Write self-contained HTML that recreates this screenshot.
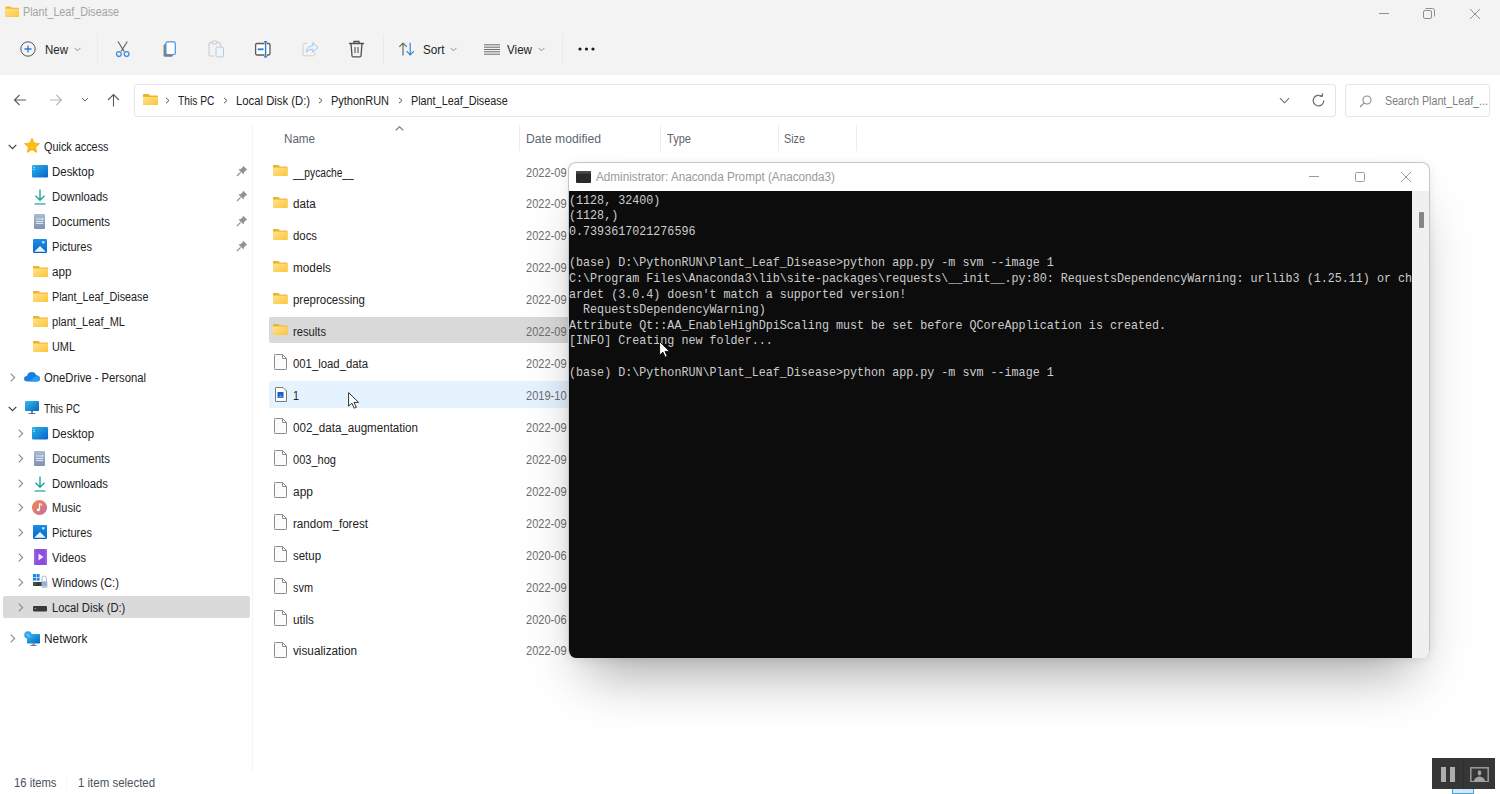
<!DOCTYPE html>
<html><head><meta charset="utf-8"><title>Plant_Leaf_Disease</title>
<style>
html,body{margin:0;padding:0;width:1500px;height:794px;overflow:hidden;background:#fff}
body{position:relative;font-family:'Liberation Sans', sans-serif}
</style></head><body>
<svg width="0" height="0" style="position:absolute"><defs><linearGradient id="fgrad" x1="0" y1="0" x2="1" y2="1"><stop offset="0" stop-color="#ffe38c"/><stop offset="1" stop-color="#fcc53a"/></linearGradient></defs></svg>
<div style="position:absolute;left:0;top:0;width:1500px;height:75px;background:#f3f3f3"></div>
<div style="position:absolute;left:0;top:75px;width:1500px;height:719px;background:#ffffff"></div>
<svg style="position:absolute;left:4.5px;top:5.5px" width="14.5" height="11.3" viewBox="0 0 16 13" preserveAspectRatio="none"><path d="M0.5 1.2 Q0.5 0.5 1.2 0.5 H6 L7.5 2 H14.8 Q15.5 2 15.5 2.7 V12 Q15.5 12.5 15 12.5 H1 Q0.5 12.5 0.5 12 Z" fill="#f2b830"/><path d="M0.5 3.2 H15.5 V12 Q15.5 12.5 15 12.5 H1 Q0.5 12.5 0.5 12 Z" fill="url(#fgrad)"/></svg>
<div style="position:absolute;left:23.00px;top:4.04px;font-family:'Liberation Sans', sans-serif;font-size:12px;line-height:17px;color:#a4a4a4;white-space:pre;transform:scaleX(0.8937);transform-origin:0 0">Plant_Leaf_Disease</div>
<div style="position:absolute;left:1379px;top:13px;width:10px;height:1px;background:#8f8f8f"></div>
<svg style="position:absolute;left:1423px;top:8px" width="12" height="12" viewBox="0 0 12 12" fill="none" stroke="#8f8f8f" stroke-width="1"><rect x="0.5" y="2.5" width="8" height="8" rx="1.5"/><path d="M2.5 0.5 H9.5 Q11.5 0.5 11.5 2.5 V8.5"/></svg>
<svg style="position:absolute;left:1469px;top:8px" width="12" height="12" viewBox="0 0 12 12" fill="none" stroke="#8f8f8f" stroke-width="1"><path d="M1 1 L11 11 M11 1 L1 11"/></svg>
<svg style="position:absolute;left:20px;top:41px" width="16" height="16" viewBox="0 0 16 16" fill="none"><circle cx="8" cy="8" r="7.2" stroke="#555" stroke-width="1"/><path d="M8 4.5 V11.5 M4.5 8 H11.5" stroke="#2b7bd6" stroke-width="1.3"/></svg>
<div style="position:absolute;left:45.00px;top:42.04px;font-family:'Liberation Sans', sans-serif;font-size:12px;line-height:17px;color:#222222;white-space:pre;transform:scaleX(0.9577);transform-origin:0 0">New</div>
<svg style="position:absolute;left:74px;top:47px" width="7" height="5" viewBox="0 0 7 5" fill="none" stroke="#8a8a8a" stroke-width="1"><path d="M0.5 0.8 L3.5 3.8 L6.5 0.8"/></svg>
<div style="position:absolute;left:97px;top:34px;width:1px;height:29px;background:#e9e9e9"></div>
<svg style="position:absolute;left:114px;top:40px" width="17" height="18" viewBox="0 0 17 18" fill="none"><path d="M4 1.5 L10.2 11.5 M13.3 1.5 L7.1 11.5" stroke="#5e5e5e" stroke-width="1.1"/><circle cx="4.9" cy="14.1" r="2.4" stroke="#3f8ddb" stroke-width="1.3"/><circle cx="12.6" cy="14.1" r="2.4" stroke="#3f8ddb" stroke-width="1.3"/></svg>
<svg style="position:absolute;left:162px;top:40px" width="16" height="18" viewBox="0 0 16 18" fill="none"><rect x="1.6" y="4" width="9.2" height="12.8" rx="1.6" fill="#7d7d7d"/><rect x="3.9" y="1.9" width="9.4" height="12.6" rx="1.6" fill="#fdfeff" stroke="#4596e3" stroke-width="1.2"/></svg>
<svg style="position:absolute;left:208px;top:40px" width="17" height="18" viewBox="0 0 17 18" fill="none" stroke-width="1"><path d="M9 2.5 H11 Q12.5 2.5 12.5 4 V6 M4 2.5 H2 Q1 2.5 1 4 V15 Q1 16 2 16 H6" stroke="#c9c9c9"/><rect x="4" y="1" width="5" height="3" rx="1" stroke="#c9c9c9"/><rect x="8" y="7" width="7.5" height="10" rx="1.5" stroke="#a9cbef"/></svg>
<svg style="position:absolute;left:254px;top:40px" width="18" height="18" viewBox="0 0 18 18" fill="none"><path d="M10.5 3.5 H3 Q1.6 3.5 1.6 4.9 V13.6 Q1.6 15 3 15 H10.5" stroke="#5a5a5a" stroke-width="1.3" fill="#fff"/><path d="M12.8 3.5 H14.6 Q16 3.5 16 4.9 V13.6 Q16 15 14.6 15 H12.8" stroke="#5a5a5a" stroke-width="1.3" fill="#fff"/><path d="M11.6 1.5 V17 M10 1.7 H13.2 M10 16.8 H13.2" stroke="#2b7bd6" stroke-width="1.3"/><path d="M3.8 9.3 H9.6" stroke="#2b7bd6" stroke-width="1.8"/></svg>
<svg style="position:absolute;left:302px;top:41px" width="17" height="16" viewBox="0 0 17 16" fill="none" stroke-width="1"><path d="M5 2.5 H2.2 Q1 2.5 1 3.7 V13.6 Q1 14.8 2.2 14.8 H11.6 Q12.8 14.8 12.8 13.6 V11.5" stroke="#d0d0d0"/><path d="M4.2 11 Q5 5.2 10.8 4.8 V1.6 L16 6.4 L10.8 11.2 V8.2 Q7 8 4.2 11 Z" stroke="#9cc6ee" fill="#eef5fc"/></svg>
<svg style="position:absolute;left:348px;top:40px" width="17" height="18" viewBox="0 0 17 18" fill="none" stroke="#505050" stroke-width="1.3"><path d="M1 3.5 H16 M6 3.5 V1.5 H11 V3.5 M3 3.5 L4 16 Q4.1 16.8 5 16.8 H12 Q12.9 16.8 13 16 L14 3.5"/><path d="M7 7 V13 M10 7 V13" stroke-width="1.1"/></svg>
<div style="position:absolute;left:383px;top:34px;width:1px;height:29px;background:#e9e9e9"></div>
<svg style="position:absolute;left:398px;top:42px" width="18" height="14" viewBox="0 0 18 14" fill="none" stroke-width="1.2"><path d="M5 13.5 V1.2 M1.3 4.9 L5 1.2 L8.7 4.9" stroke="#6a6a6a"/><path d="M12.2 0.8 V12.8 M8.5 9.1 L12.2 12.8 L15.9 9.1" stroke="#2f86da"/></svg>
<div style="position:absolute;left:422.70px;top:42.04px;font-family:'Liberation Sans', sans-serif;font-size:12px;line-height:17px;color:#222222;white-space:pre;transform:scaleX(0.9766);transform-origin:0 0">Sort</div>
<svg style="position:absolute;left:450px;top:47px" width="7" height="5" viewBox="0 0 7 5" fill="none" stroke="#8a8a8a" stroke-width="1"><path d="M0.5 0.8 L3.5 3.8 L6.5 0.8"/></svg>
<svg style="position:absolute;left:483.5px;top:43.5px" width="16" height="11" viewBox="0 0 16 11" fill="none" stroke="#5a5a5a" stroke-width="0.9"><path d="M0 0.8 H16 M0 3.2 H16 M0 5.5 H16 M0 7.8 H16 M0 10.2 H16"/></svg>
<div style="position:absolute;left:507.20px;top:42.04px;font-family:'Liberation Sans', sans-serif;font-size:12px;line-height:17px;color:#222222;white-space:pre;transform:scaleX(0.9691);transform-origin:0 0">View</div>
<svg style="position:absolute;left:538px;top:47px" width="7" height="5" viewBox="0 0 7 5" fill="none" stroke="#8a8a8a" stroke-width="1"><path d="M0.5 0.8 L3.5 3.8 L6.5 0.8"/></svg>
<div style="position:absolute;left:562px;top:34px;width:1px;height:29px;background:#e9e9e9"></div>
<svg style="position:absolute;left:578px;top:47px" width="17" height="4" viewBox="0 0 17 4" fill="#1b1b1b"><circle cx="2" cy="2" r="1.6"/><circle cx="8.5" cy="2" r="1.6"/><circle cx="15" cy="2" r="1.6"/></svg>
<svg style="position:absolute;left:13px;top:93px" width="14" height="14" viewBox="0 0 14 14" fill="none" stroke="#5a5a5a" stroke-width="1.1"><path d="M1.5 7 H13 M6.5 2 L1.5 7 L6.5 12"/></svg>
<svg style="position:absolute;left:49px;top:93px" width="14" height="14" viewBox="0 0 14 14" fill="none" stroke="#b5b5b5" stroke-width="1.1"><path d="M12.5 7 H1 M7.5 2 L12.5 7 L7.5 12"/></svg>
<svg style="position:absolute;left:81px;top:97px" width="8" height="5" viewBox="0 0 8 5" fill="none" stroke="#6a6a6a" stroke-width="1"><path d="M1 1 L4 4 L7 1"/></svg>
<svg style="position:absolute;left:106px;top:93px" width="15" height="14" viewBox="0 0 15 14" fill="none" stroke="#5a5a5a" stroke-width="1.1"><path d="M7.5 1.5 V13.5 M2 7 L7.5 1.5 L13 7"/></svg>
<div style="position:absolute;left:134px;top:83.5px;width:1202px;height:33.5px;box-sizing:border-box;border:1px solid #e5e5e5;border-radius:3px;background:#fff"></div>
<svg style="position:absolute;left:143px;top:94px" width="15" height="11" viewBox="0 0 15 11"><path d="M0 1 Q0 0 1 0 H5.5 L7 1.5 H14 Q15 1.5 15 2.5 V10 Q15 11 14 11 H1 Q0 11 0 10 Z" fill="#f0b429"/><path d="M0 3 H15 V10 Q15 11 14 11 H1 Q0 11 0 10 Z" fill="url(#fgrad)"/></svg>
<svg style="position:absolute;left:165.0px;top:97px" width="5" height="7" viewBox="0 0 5 7" fill="none" stroke="#555" stroke-width="1"><path d="M1 0.8 L4 3.5 L1 6.2"/></svg>
<svg style="position:absolute;left:223.0px;top:97px" width="5" height="7" viewBox="0 0 5 7" fill="none" stroke="#555" stroke-width="1"><path d="M1 0.8 L4 3.5 L1 6.2"/></svg>
<svg style="position:absolute;left:317.9px;top:97px" width="5" height="7" viewBox="0 0 5 7" fill="none" stroke="#555" stroke-width="1"><path d="M1 0.8 L4 3.5 L1 6.2"/></svg>
<svg style="position:absolute;left:397.7px;top:97px" width="5" height="7" viewBox="0 0 5 7" fill="none" stroke="#555" stroke-width="1"><path d="M1 0.8 L4 3.5 L1 6.2"/></svg>
<div style="position:absolute;left:177.90px;top:92.54px;font-family:'Liberation Sans', sans-serif;font-size:12px;line-height:17px;color:#222222;white-space:pre;transform:scaleX(0.8527);transform-origin:0 0">This PC</div>
<div style="position:absolute;left:235.90px;top:92.54px;font-family:'Liberation Sans', sans-serif;font-size:12px;line-height:17px;color:#222222;white-space:pre;transform:scaleX(0.9417);transform-origin:0 0">Local Disk (D:)</div>
<div style="position:absolute;left:331.30px;top:92.54px;font-family:'Liberation Sans', sans-serif;font-size:12px;line-height:17px;color:#222222;white-space:pre;transform:scaleX(0.9154);transform-origin:0 0">PythonRUN</div>
<div style="position:absolute;left:410.60px;top:92.54px;font-family:'Liberation Sans', sans-serif;font-size:12px;line-height:17px;color:#222222;white-space:pre;transform:scaleX(0.9002);transform-origin:0 0">Plant_Leaf_Disease</div>
<svg style="position:absolute;left:1279px;top:96.5px" width="11" height="7" viewBox="0 0 12 7" fill="none" stroke="#666" stroke-width="1.1"><path d="M1 1 L6 6 L11 1"/></svg>
<svg style="position:absolute;left:1310.5px;top:93px" width="15" height="15" viewBox="0 0 15 15" fill="none" stroke="#6a6a6a" stroke-width="1.2"><path d="M12.8 7.5 A5.3 5.3 0 1 1 10.8 3.4"/><path d="M8.5 3.2 H11.5 V0.2" /></svg>
<div style="position:absolute;left:1345px;top:83.5px;width:145px;height:33px;box-sizing:border-box;border:1px solid #e5e5e5;border-radius:3px;background:#fff"></div>
<svg style="position:absolute;left:1359px;top:94.5px" width="13" height="13" viewBox="0 0 13 13" fill="none" stroke="#888" stroke-width="1.1"><circle cx="8" cy="5" r="4"/><path d="M5.2 7.8 L1 12"/></svg>
<div style="position:absolute;left:1385.00px;top:93.34px;font-family:'Liberation Sans', sans-serif;font-size:12px;line-height:17px;color:#7d7d7d;white-space:pre;transform:scaleX(0.8924);transform-origin:0 0">Search Plant_Leaf_...</div>
<div style="position:absolute;left:252px;top:125px;width:1px;height:647px;background:#f4f4f4"></div>
<div style="position:absolute;left:2.7px;top:596.4px;width:247.6px;height:21.2px;background:#dadada;border-radius:2px"></div>
<svg style="position:absolute;left:8px;top:144px" width="9" height="6" viewBox="0 0 9 6" fill="none" stroke="#3a3a3a" stroke-width="1.1"><path d="M0.7 0.8 L4.5 4.6 L8.3 0.8"/></svg>
<svg style="position:absolute;left:24px;top:138px" width="16" height="16" viewBox="1 1 22 22"><path d="M12 1.5 L15.1 8 L22.3 8.8 L17 13.7 L18.5 20.8 L12 17.2 L5.5 20.8 L7 13.7 L1.7 8.8 L8.9 8 Z" fill="#fbbf16" stroke="#f5a800" stroke-width="1" stroke-linejoin="round"/></svg>
<div style="position:absolute;left:43.75px;top:138.79px;font-family:'Liberation Sans', sans-serif;font-size:12px;line-height:17px;color:#222222;white-space:pre;transform:scaleX(0.9039);transform-origin:0 0">Quick access</div>
<svg style="position:absolute;left:32px;top:165px" width="16" height="13" viewBox="0 0 16 13"><defs><linearGradient id="dg32165" x1="0" y1="0" x2="1" y2="1"><stop offset="0" stop-color="#28b5ea"/><stop offset="1" stop-color="#0a62c9"/></linearGradient></defs><rect x="0" y="0" width="16" height="12.5" rx="1.2" fill="url(#dg32165)"/><rect x="1.5" y="2" width="1.2" height="1" fill="#d8f2ff"/><rect x="1.5" y="4" width="1.2" height="1" fill="#d8f2ff"/></svg>
<div style="position:absolute;left:52.40px;top:164.04px;font-family:'Liberation Sans', sans-serif;font-size:12px;line-height:17px;color:#222222;white-space:pre;transform:scaleX(0.9539);transform-origin:0 0">Desktop</div>
<svg style="position:absolute;left:236px;top:165px" width="12" height="12" viewBox="0 0 12 12"><path d="M7.2 0.8 L11.2 4.8 L9.8 5.4 L8 7.2 L7.6 9.6 L2.4 4.4 L4.8 4 L6.6 2.2 Z" fill="#8d9498"/><path d="M4.6 7.4 L1 11" stroke="#8d9498" stroke-width="1.2"/></svg>
<svg style="position:absolute;left:34px;top:188.5px" width="12" height="16" viewBox="0 0 12 16" fill="none" stroke="#1fa39a" stroke-width="1.4"><path d="M6 0.5 V11 M1.5 6.8 L6 11.2 L10.5 6.8"/><path d="M0.5 15 H11.5" stroke="#52c0b0" stroke-width="1.6"/></svg>
<div style="position:absolute;left:52.40px;top:189.04px;font-family:'Liberation Sans', sans-serif;font-size:12px;line-height:17px;color:#222222;white-space:pre;transform:scaleX(0.9432);transform-origin:0 0">Downloads</div>
<svg style="position:absolute;left:236px;top:190px" width="12" height="12" viewBox="0 0 12 12"><path d="M7.2 0.8 L11.2 4.8 L9.8 5.4 L8 7.2 L7.6 9.6 L2.4 4.4 L4.8 4 L6.6 2.2 Z" fill="#8d9498"/><path d="M4.6 7.4 L1 11" stroke="#8d9498" stroke-width="1.2"/></svg>
<svg style="position:absolute;left:34.4px;top:213.5px" width="11" height="15" viewBox="0 0 11 15"><defs><linearGradient id="dc34_4213_5" x1="0" y1="0" x2="0" y2="1"><stop offset="0" stop-color="#a9bbd3"/><stop offset="1" stop-color="#7d93b3"/></linearGradient></defs><rect x="0" y="0" width="11" height="15" rx="1" fill="url(#dc34_4213_5)"/><path d="M2 5 H7 M2 7.5 H9 M2 9.5 H9" stroke="#dfe8f3" stroke-width="1"/><rect x="7.6" y="4.2" width="1.6" height="1.6" fill="#fff"/></svg>
<div style="position:absolute;left:52.40px;top:214.04px;font-family:'Liberation Sans', sans-serif;font-size:12px;line-height:17px;color:#222222;white-space:pre;transform:scaleX(0.9555);transform-origin:0 0">Documents</div>
<svg style="position:absolute;left:236px;top:215px" width="12" height="12" viewBox="0 0 12 12"><path d="M7.2 0.8 L11.2 4.8 L9.8 5.4 L8 7.2 L7.6 9.6 L2.4 4.4 L4.8 4 L6.6 2.2 Z" fill="#8d9498"/><path d="M4.6 7.4 L1 11" stroke="#8d9498" stroke-width="1.2"/></svg>
<svg style="position:absolute;left:33px;top:239.2px" width="14" height="14" viewBox="0 0 14 14"><defs><linearGradient id="pc33239_2" x1="0" y1="0" x2="0" y2="1"><stop offset="0" stop-color="#1b8ee8"/><stop offset="1" stop-color="#0a66c9"/></linearGradient></defs><rect x="0" y="0" width="14" height="14" rx="1" fill="url(#pc33239_2)"/><path d="M1.2 12.8 L7 7 L12.8 12.8 Z" fill="#eaf4fd"/><circle cx="10.3" cy="3.3" r="1.2" fill="#cfe8fb"/></svg>
<div style="position:absolute;left:52.40px;top:239.04px;font-family:'Liberation Sans', sans-serif;font-size:12px;line-height:17px;color:#222222;white-space:pre;transform:scaleX(0.9225);transform-origin:0 0">Pictures</div>
<svg style="position:absolute;left:236px;top:240px" width="12" height="12" viewBox="0 0 12 12"><path d="M7.2 0.8 L11.2 4.8 L9.8 5.4 L8 7.2 L7.6 9.6 L2.4 4.4 L4.8 4 L6.6 2.2 Z" fill="#8d9498"/><path d="M4.6 7.4 L1 11" stroke="#8d9498" stroke-width="1.2"/></svg>
<svg style="position:absolute;left:32.5px;top:265.5px" width="15" height="11" viewBox="0 0 15 11" preserveAspectRatio="none"><path d="M0 0.8 Q0 0 0.8 0 H5.5 L7 1.5 H14.2 Q15 1.5 15 2.3 V10.2 Q15 11 14.2 11 H0.8 Q0 11 0 10.2 Z" fill="#efb12a"/><path d="M0 2.6 H15 V10.2 Q15 11 14.2 11 H0.8 Q0 11 0 10.2 Z" fill="url(#fgrad)"/></svg>
<div style="position:absolute;left:52.40px;top:264.04px;font-family:'Liberation Sans', sans-serif;font-size:12px;line-height:17px;color:#222222;white-space:pre;transform:scaleX(0.9735);transform-origin:0 0">app</div>
<svg style="position:absolute;left:32.5px;top:290.5px" width="15" height="11" viewBox="0 0 15 11" preserveAspectRatio="none"><path d="M0 0.8 Q0 0 0.8 0 H5.5 L7 1.5 H14.2 Q15 1.5 15 2.3 V10.2 Q15 11 14.2 11 H0.8 Q0 11 0 10.2 Z" fill="#efb12a"/><path d="M0 2.6 H15 V10.2 Q15 11 14.2 11 H0.8 Q0 11 0 10.2 Z" fill="url(#fgrad)"/></svg>
<div style="position:absolute;left:52.40px;top:289.04px;font-family:'Liberation Sans', sans-serif;font-size:12px;line-height:17px;color:#222222;white-space:pre;transform:scaleX(0.8983);transform-origin:0 0">Plant_Leaf_Disease</div>
<svg style="position:absolute;left:32.5px;top:315.5px" width="15" height="11" viewBox="0 0 15 11" preserveAspectRatio="none"><path d="M0 0.8 Q0 0 0.8 0 H5.5 L7 1.5 H14.2 Q15 1.5 15 2.3 V10.2 Q15 11 14.2 11 H0.8 Q0 11 0 10.2 Z" fill="#efb12a"/><path d="M0 2.6 H15 V10.2 Q15 11 14.2 11 H0.8 Q0 11 0 10.2 Z" fill="url(#fgrad)"/></svg>
<div style="position:absolute;left:52.40px;top:314.04px;font-family:'Liberation Sans', sans-serif;font-size:12px;line-height:17px;color:#222222;white-space:pre;transform:scaleX(0.9193);transform-origin:0 0">plant_Leaf_ML</div>
<svg style="position:absolute;left:32.5px;top:340.5px" width="15" height="11" viewBox="0 0 15 11" preserveAspectRatio="none"><path d="M0 0.8 Q0 0 0.8 0 H5.5 L7 1.5 H14.2 Q15 1.5 15 2.3 V10.2 Q15 11 14.2 11 H0.8 Q0 11 0 10.2 Z" fill="#efb12a"/><path d="M0 2.6 H15 V10.2 Q15 11 14.2 11 H0.8 Q0 11 0 10.2 Z" fill="url(#fgrad)"/></svg>
<div style="position:absolute;left:52.40px;top:339.04px;font-family:'Liberation Sans', sans-serif;font-size:12px;line-height:17px;color:#222222;white-space:pre;transform:scaleX(0.9075);transform-origin:0 0">UML</div>
<svg style="position:absolute;left:10.2px;top:372.5px" width="6" height="9" viewBox="0 0 6 9" fill="none" stroke="#8a8a8a" stroke-width="1.1"><path d="M0.8 0.7 L4.6 4.5 L0.8 8.3"/></svg>
<svg style="position:absolute;left:24px;top:371px" width="16" height="11" viewBox="0 0 16 11"><path d="M3.5 10.5 Q0 10.5 0 7.8 Q0 5.3 3 5 Q3.8 1 7.8 1 Q11 1 12.3 4.3 Q16 4.6 16 7.6 Q16 10.5 12.8 10.5 Z" fill="#1a7fe0"/><path d="M6 10.5 L9.5 6.5 Q12 4.5 14.5 5.6 Q16 6.5 16 7.8 Q16 10.5 12.8 10.5 Z" fill="#2d9cf0"/></svg>
<div style="position:absolute;left:43.90px;top:370.04px;font-family:'Liberation Sans', sans-serif;font-size:12px;line-height:17px;color:#222222;white-space:pre;transform:scaleX(0.9382);transform-origin:0 0">OneDrive - Personal</div>
<svg style="position:absolute;left:8px;top:406px" width="9" height="6" viewBox="0 0 9 6" fill="none" stroke="#3a3a3a" stroke-width="1.1"><path d="M0.7 0.8 L4.5 4.6 L8.3 0.8"/></svg>
<svg style="position:absolute;left:25px;top:401px" width="14" height="14" viewBox="0 0 14 14"><defs><linearGradient id="tpc" x1="0" y1="0" x2="1" y2="1"><stop offset="0" stop-color="#2cc0ec"/><stop offset="1" stop-color="#0b62c4"/></linearGradient></defs><rect x="0" y="0" width="14" height="10" rx="0.8" fill="url(#tpc)"/><rect x="6" y="10" width="2" height="2" fill="#6b7c8c"/><rect x="3.5" y="12" width="7" height="1" fill="#6b7c8c"/></svg>
<div style="position:absolute;left:43.90px;top:401.04px;font-family:'Liberation Sans', sans-serif;font-size:12px;line-height:17px;color:#222222;white-space:pre;transform:scaleX(0.8433);transform-origin:0 0">This PC</div>
<svg style="position:absolute;left:18.2px;top:428.5px" width="6" height="9" viewBox="0 0 6 9" fill="none" stroke="#8a8a8a" stroke-width="1.1"><path d="M0.8 0.7 L4.6 4.5 L0.8 8.3"/></svg>
<svg style="position:absolute;left:32px;top:427px" width="16" height="13" viewBox="0 0 16 13"><defs><linearGradient id="dg32427" x1="0" y1="0" x2="1" y2="1"><stop offset="0" stop-color="#28b5ea"/><stop offset="1" stop-color="#0a62c9"/></linearGradient></defs><rect x="0" y="0" width="16" height="12.5" rx="1.2" fill="url(#dg32427)"/><rect x="1.5" y="2" width="1.2" height="1" fill="#d8f2ff"/><rect x="1.5" y="4" width="1.2" height="1" fill="#d8f2ff"/></svg>
<div style="position:absolute;left:52.40px;top:426.04px;font-family:'Liberation Sans', sans-serif;font-size:12px;line-height:17px;color:#222222;white-space:pre;transform:scaleX(0.9539);transform-origin:0 0">Desktop</div>
<svg style="position:absolute;left:18.2px;top:453.5px" width="6" height="9" viewBox="0 0 6 9" fill="none" stroke="#8a8a8a" stroke-width="1.1"><path d="M0.8 0.7 L4.6 4.5 L0.8 8.3"/></svg>
<svg style="position:absolute;left:34.4px;top:450.5px" width="11" height="15" viewBox="0 0 11 15"><defs><linearGradient id="dc34_4450_5" x1="0" y1="0" x2="0" y2="1"><stop offset="0" stop-color="#a9bbd3"/><stop offset="1" stop-color="#7d93b3"/></linearGradient></defs><rect x="0" y="0" width="11" height="15" rx="1" fill="url(#dc34_4450_5)"/><path d="M2 5 H7 M2 7.5 H9 M2 9.5 H9" stroke="#dfe8f3" stroke-width="1"/><rect x="7.6" y="4.2" width="1.6" height="1.6" fill="#fff"/></svg>
<div style="position:absolute;left:52.40px;top:451.04px;font-family:'Liberation Sans', sans-serif;font-size:12px;line-height:17px;color:#222222;white-space:pre;transform:scaleX(0.9555);transform-origin:0 0">Documents</div>
<svg style="position:absolute;left:18.2px;top:478.5px" width="6" height="9" viewBox="0 0 6 9" fill="none" stroke="#8a8a8a" stroke-width="1.1"><path d="M0.8 0.7 L4.6 4.5 L0.8 8.3"/></svg>
<svg style="position:absolute;left:34px;top:475.5px" width="12" height="16" viewBox="0 0 12 16" fill="none" stroke="#1fa39a" stroke-width="1.4"><path d="M6 0.5 V11 M1.5 6.8 L6 11.2 L10.5 6.8"/><path d="M0.5 15 H11.5" stroke="#52c0b0" stroke-width="1.6"/></svg>
<div style="position:absolute;left:52.40px;top:476.04px;font-family:'Liberation Sans', sans-serif;font-size:12px;line-height:17px;color:#222222;white-space:pre;transform:scaleX(0.9432);transform-origin:0 0">Downloads</div>
<svg style="position:absolute;left:18.2px;top:502.5px" width="6" height="9" viewBox="0 0 6 9" fill="none" stroke="#8a8a8a" stroke-width="1.1"><path d="M0.8 0.7 L4.6 4.5 L0.8 8.3"/></svg>
<svg style="position:absolute;left:32px;top:500px" width="15" height="15" viewBox="0 0 15 15"><defs><linearGradient id="mus" x1="0" y1="0" x2="1" y2="1"><stop offset="0" stop-color="#f08a4a"/><stop offset="1" stop-color="#c86aa8"/></linearGradient></defs><circle cx="7.5" cy="7.5" r="7.5" fill="url(#mus)"/><path d="M7.5 3.5 V9.5 M7.5 3.5 Q9.5 4 9.8 5.5" stroke="#fff" stroke-width="1.2" fill="none"/><circle cx="6.3" cy="9.8" r="1.5" fill="#fff"/></svg>
<div style="position:absolute;left:52.40px;top:500.04px;font-family:'Liberation Sans', sans-serif;font-size:12px;line-height:17px;color:#222222;white-space:pre;transform:scaleX(0.9252);transform-origin:0 0">Music</div>
<svg style="position:absolute;left:18.2px;top:527.5px" width="6" height="9" viewBox="0 0 6 9" fill="none" stroke="#8a8a8a" stroke-width="1.1"><path d="M0.8 0.7 L4.6 4.5 L0.8 8.3"/></svg>
<svg style="position:absolute;left:33px;top:525px" width="14" height="14" viewBox="0 0 14 14"><defs><linearGradient id="pc33525" x1="0" y1="0" x2="0" y2="1"><stop offset="0" stop-color="#1b8ee8"/><stop offset="1" stop-color="#0a66c9"/></linearGradient></defs><rect x="0" y="0" width="14" height="14" rx="1" fill="url(#pc33525)"/><path d="M1.2 12.8 L7 7 L12.8 12.8 Z" fill="#eaf4fd"/><circle cx="10.3" cy="3.3" r="1.2" fill="#cfe8fb"/></svg>
<div style="position:absolute;left:52.40px;top:525.04px;font-family:'Liberation Sans', sans-serif;font-size:12px;line-height:17px;color:#222222;white-space:pre;transform:scaleX(0.9225);transform-origin:0 0">Pictures</div>
<svg style="position:absolute;left:18.2px;top:552.5px" width="6" height="9" viewBox="0 0 6 9" fill="none" stroke="#8a8a8a" stroke-width="1.1"><path d="M0.8 0.7 L4.6 4.5 L0.8 8.3"/></svg>
<svg style="position:absolute;left:33.5px;top:549px" width="13" height="16" viewBox="0 0 13 16"><rect x="0" y="0" width="13" height="16" rx="1" fill="#8b4fe0"/><path d="M1 1 V15 M12 1 V15" stroke="#b88af0" stroke-width="1" stroke-dasharray="1.2 1.2"/><path d="M4.5 4.5 L9.5 8 L4.5 11.5 Z" fill="#f3eafd"/></svg>
<div style="position:absolute;left:52.40px;top:550.04px;font-family:'Liberation Sans', sans-serif;font-size:12px;line-height:17px;color:#222222;white-space:pre;transform:scaleX(0.9319);transform-origin:0 0">Videos</div>
<svg style="position:absolute;left:18.2px;top:577.5px" width="6" height="9" viewBox="0 0 6 9" fill="none" stroke="#8a8a8a" stroke-width="1.1"><path d="M0.8 0.7 L4.6 4.5 L0.8 8.3"/></svg>
<svg style="position:absolute;left:32.5px;top:574px" width="15" height="15" viewBox="0 0 15 15"><rect x="0" y="0" width="3" height="3" fill="#1a86e0"/><rect x="3.6" y="0" width="3" height="3" fill="#1a86e0"/><rect x="0" y="3.6" width="3" height="3" fill="#1a86e0"/><rect x="3.6" y="3.6" width="3" height="3" fill="#1a86e0"/><rect x="0" y="8" width="14" height="4" rx="0.8" fill="#3c3c3c"/><rect x="1.2" y="9.5" width="1.5" height="1" fill="#36c24a"/><path d="M9 8 V4.5 Q9 2 11.2 2 Q13.4 2 13.4 4.5 V8" stroke="#9fb7cf" stroke-width="1" fill="none"/><rect x="8.5" y="7" width="6" height="7" rx="1" fill="#a8c7e6" opacity="0.85"/></svg>
<div style="position:absolute;left:52.00px;top:574.54px;font-family:'Liberation Sans', sans-serif;font-size:12px;line-height:17px;color:#222222;white-space:pre;transform:scaleX(0.9290);transform-origin:0 0">Windows (C:)</div>
<svg style="position:absolute;left:18.2px;top:602.5px" width="6" height="9" viewBox="0 0 6 9" fill="none" stroke="#8a8a8a" stroke-width="1.1"><path d="M0.8 0.7 L4.6 4.5 L0.8 8.3"/></svg>
<svg style="position:absolute;left:32.7px;top:605.5px" width="14" height="6" viewBox="0 0 14 6"><rect x="0" y="0" width="14" height="5.5" rx="1" fill="#3a3a3a"/><rect x="1.5" y="2" width="1.6" height="1.2" fill="#36c24a"/></svg>
<div style="position:absolute;left:52.00px;top:599.64px;font-family:'Liberation Sans', sans-serif;font-size:12px;line-height:17px;color:#222222;white-space:pre;transform:scaleX(0.9315);transform-origin:0 0">Local Disk (D:)</div>
<svg style="position:absolute;left:10.2px;top:633.5px" width="6" height="9" viewBox="0 0 6 9" fill="none" stroke="#8a8a8a" stroke-width="1.1"><path d="M0.8 0.7 L4.6 4.5 L0.8 8.3"/></svg>
<svg style="position:absolute;left:24px;top:630.5px" width="16" height="15" viewBox="0 0 16 15"><defs><linearGradient id="net" x1="0" y1="0" x2="1" y2="1"><stop offset="0" stop-color="#2cc0ec"/><stop offset="1" stop-color="#0b62c4"/></linearGradient></defs><rect x="3" y="3" width="13" height="9.5" rx="0.8" fill="url(#net)"/><rect x="8.5" y="12.5" width="2" height="1.5" fill="#6b7c8c"/><rect x="6.5" y="14" width="6" height="1" fill="#6b7c8c"/><circle cx="4" cy="4" r="3.8" fill="#3aa6e8"/><path d="M2.5 3 Q4 4.5 5.5 5.5" stroke="#bfe6fb" stroke-width="0.9" fill="none"/></svg>
<div style="position:absolute;left:43.90px;top:630.64px;font-family:'Liberation Sans', sans-serif;font-size:12px;line-height:17px;color:#222222;white-space:pre;transform:scaleX(0.9860);transform-origin:0 0">Network</div>
<svg style="position:absolute;left:394.5px;top:125.5px" width="9" height="5" viewBox="0 0 9 5" fill="none" stroke="#808080" stroke-width="1.2"><path d="M0.8 4.3 L4.5 0.8 L8.2 4.3"/></svg>
<div style="position:absolute;left:283.50px;top:131.44px;font-family:'Liberation Sans', sans-serif;font-size:12px;line-height:17px;color:#5c6570;white-space:pre;transform:scaleX(0.9683);transform-origin:0 0">Name</div>
<div style="position:absolute;left:519.2px;top:125px;width:1px;height:26px;background:#ececec"></div>
<div style="position:absolute;left:659.8px;top:125px;width:1px;height:26px;background:#ececec"></div>
<div style="position:absolute;left:777.5px;top:125px;width:1px;height:26px;background:#ececec"></div>
<div style="position:absolute;left:855.5px;top:125px;width:1px;height:26px;background:#ececec"></div>
<div style="position:absolute;left:526.10px;top:131.44px;font-family:'Liberation Sans', sans-serif;font-size:12px;line-height:17px;color:#5c6570;white-space:pre;transform:scaleX(1.0129);transform-origin:0 0">Date modified</div>
<div style="position:absolute;left:667.00px;top:131.44px;font-family:'Liberation Sans', sans-serif;font-size:12px;line-height:17px;color:#5c6570;white-space:pre;transform:scaleX(0.9225);transform-origin:0 0">Type</div>
<div style="position:absolute;left:783.70px;top:131.44px;font-family:'Liberation Sans', sans-serif;font-size:12px;line-height:17px;color:#5c6570;white-space:pre;transform:scaleX(0.8996);transform-origin:0 0">Size</div>
<div style="position:absolute;left:269px;top:316.8px;width:320px;height:26.2px;background:#d9d9d9;border-radius:2px"></div>
<div style="position:absolute;left:269px;top:380.9px;width:320px;height:27.3px;background:#e5f3ff;border-radius:2px"></div>
<svg style="position:absolute;left:273.4px;top:164.8px" width="14.5" height="11" viewBox="0 0 15 11" preserveAspectRatio="none"><path d="M0 0.8 Q0 0 0.8 0 H5.5 L7 1.5 H14.2 Q15 1.5 15 2.3 V10.2 Q15 11 14.2 11 H0.8 Q0 11 0 10.2 Z" fill="#efb12a"/><path d="M0 2.6 H15 V10.2 Q15 11 14.2 11 H0.8 Q0 11 0 10.2 Z" fill="url(#fgrad)"/></svg>
<div style="position:absolute;left:292.50px;top:164.54px;font-family:'Liberation Sans', sans-serif;font-size:12px;line-height:17px;color:#222222;white-space:pre;transform:scaleX(0.8503);transform-origin:0 0">__pycache__</div>
<div style="position:absolute;left:526.10px;top:164.54px;font-family:'Liberation Sans', sans-serif;font-size:12px;line-height:17px;color:#6d6d6d;white-space:pre;transform:scaleX(0.9200);transform-origin:0 0">2022-09</div>
<svg style="position:absolute;left:273.4px;top:196.73000000000002px" width="14.5" height="11" viewBox="0 0 15 11" preserveAspectRatio="none"><path d="M0 0.8 Q0 0 0.8 0 H5.5 L7 1.5 H14.2 Q15 1.5 15 2.3 V10.2 Q15 11 14.2 11 H0.8 Q0 11 0 10.2 Z" fill="#efb12a"/><path d="M0 2.6 H15 V10.2 Q15 11 14.2 11 H0.8 Q0 11 0 10.2 Z" fill="url(#fgrad)"/></svg>
<div style="position:absolute;left:292.50px;top:196.47px;font-family:'Liberation Sans', sans-serif;font-size:12px;line-height:17px;color:#222222;white-space:pre;transform:scaleX(0.9718);transform-origin:0 0">data</div>
<div style="position:absolute;left:526.10px;top:196.47px;font-family:'Liberation Sans', sans-serif;font-size:12px;line-height:17px;color:#6d6d6d;white-space:pre;transform:scaleX(0.9200);transform-origin:0 0">2022-09</div>
<svg style="position:absolute;left:273.4px;top:228.66000000000003px" width="14.5" height="11" viewBox="0 0 15 11" preserveAspectRatio="none"><path d="M0 0.8 Q0 0 0.8 0 H5.5 L7 1.5 H14.2 Q15 1.5 15 2.3 V10.2 Q15 11 14.2 11 H0.8 Q0 11 0 10.2 Z" fill="#efb12a"/><path d="M0 2.6 H15 V10.2 Q15 11 14.2 11 H0.8 Q0 11 0 10.2 Z" fill="url(#fgrad)"/></svg>
<div style="position:absolute;left:292.50px;top:228.40px;font-family:'Liberation Sans', sans-serif;font-size:12px;line-height:17px;color:#222222;white-space:pre;transform:scaleX(0.9464);transform-origin:0 0">docs</div>
<div style="position:absolute;left:526.10px;top:228.40px;font-family:'Liberation Sans', sans-serif;font-size:12px;line-height:17px;color:#6d6d6d;white-space:pre;transform:scaleX(0.9200);transform-origin:0 0">2022-09</div>
<svg style="position:absolute;left:273.4px;top:260.59px" width="14.5" height="11" viewBox="0 0 15 11" preserveAspectRatio="none"><path d="M0 0.8 Q0 0 0.8 0 H5.5 L7 1.5 H14.2 Q15 1.5 15 2.3 V10.2 Q15 11 14.2 11 H0.8 Q0 11 0 10.2 Z" fill="#efb12a"/><path d="M0 2.6 H15 V10.2 Q15 11 14.2 11 H0.8 Q0 11 0 10.2 Z" fill="url(#fgrad)"/></svg>
<div style="position:absolute;left:292.50px;top:260.33px;font-family:'Liberation Sans', sans-serif;font-size:12px;line-height:17px;color:#222222;white-space:pre;transform:scaleX(0.9822);transform-origin:0 0">models</div>
<div style="position:absolute;left:526.10px;top:260.33px;font-family:'Liberation Sans', sans-serif;font-size:12px;line-height:17px;color:#6d6d6d;white-space:pre;transform:scaleX(0.9200);transform-origin:0 0">2022-09</div>
<svg style="position:absolute;left:273.4px;top:292.52000000000004px" width="14.5" height="11" viewBox="0 0 15 11" preserveAspectRatio="none"><path d="M0 0.8 Q0 0 0.8 0 H5.5 L7 1.5 H14.2 Q15 1.5 15 2.3 V10.2 Q15 11 14.2 11 H0.8 Q0 11 0 10.2 Z" fill="#efb12a"/><path d="M0 2.6 H15 V10.2 Q15 11 14.2 11 H0.8 Q0 11 0 10.2 Z" fill="url(#fgrad)"/></svg>
<div style="position:absolute;left:292.50px;top:292.26px;font-family:'Liberation Sans', sans-serif;font-size:12px;line-height:17px;color:#222222;white-space:pre;transform:scaleX(0.9552);transform-origin:0 0">preprocessing</div>
<div style="position:absolute;left:526.10px;top:292.26px;font-family:'Liberation Sans', sans-serif;font-size:12px;line-height:17px;color:#6d6d6d;white-space:pre;transform:scaleX(0.9200);transform-origin:0 0">2022-09</div>
<svg style="position:absolute;left:273.4px;top:324.45px" width="14.5" height="11" viewBox="0 0 15 11" preserveAspectRatio="none"><path d="M0 0.8 Q0 0 0.8 0 H5.5 L7 1.5 H14.2 Q15 1.5 15 2.3 V10.2 Q15 11 14.2 11 H0.8 Q0 11 0 10.2 Z" fill="#efb12a"/><path d="M0 2.6 H15 V10.2 Q15 11 14.2 11 H0.8 Q0 11 0 10.2 Z" fill="url(#fgrad)"/></svg>
<div style="position:absolute;left:292.50px;top:324.19px;font-family:'Liberation Sans', sans-serif;font-size:12px;line-height:17px;color:#222222;white-space:pre;transform:scaleX(0.9337);transform-origin:0 0">results</div>
<div style="position:absolute;left:526.10px;top:324.19px;font-family:'Liberation Sans', sans-serif;font-size:12px;line-height:17px;color:#6d6d6d;white-space:pre;transform:scaleX(0.9200);transform-origin:0 0">2022-09</div>
<svg style="position:absolute;left:273.8px;top:354.28px" width="13" height="16" viewBox="0 0 13 16" fill="#fbfbfb" stroke="#8c8c8c" stroke-width="1"><path d="M0.5 1.2 Q0.5 0.5 1.2 0.5 H8.5 L12.5 4.5 V14.8 Q12.5 15.5 11.8 15.5 H1.2 Q0.5 15.5 0.5 14.8 Z"/><path d="M8.5 0.5 V4.5 H12.5" fill="none"/></svg>
<div style="position:absolute;left:292.50px;top:356.12px;font-family:'Liberation Sans', sans-serif;font-size:12px;line-height:17px;color:#222222;white-space:pre;transform:scaleX(0.9443);transform-origin:0 0">001_load_data</div>
<div style="position:absolute;left:526.10px;top:356.12px;font-family:'Liberation Sans', sans-serif;font-size:12px;line-height:17px;color:#6d6d6d;white-space:pre;transform:scaleX(0.9200);transform-origin:0 0">2022-09</div>
<svg style="position:absolute;left:274.5px;top:386.51px" width="12" height="15" viewBox="0 0 12 15"><path d="M0.5 1 Q0.5 0.5 1 0.5 H8 L11.5 4 V14 Q11.5 14.5 11 14.5 H1 Q0.5 14.5 0.5 14 Z" fill="#fff" stroke="#6a6a6a" stroke-width="0.9"/><rect x="2.5" y="5" width="6" height="6" fill="#1d5fc0"/><path d="M3 10.5 L5.5 7.5 L8.5 10.5 Z" fill="#3c9cf0"/></svg>
<div style="position:absolute;left:292.50px;top:388.05px;font-family:'Liberation Sans', sans-serif;font-size:12px;line-height:17px;color:#222222;white-space:pre;transform:scaleX(0.8972);transform-origin:0 0">1</div>
<div style="position:absolute;left:526.10px;top:388.05px;font-family:'Liberation Sans', sans-serif;font-size:12px;line-height:17px;color:#6d6d6d;white-space:pre;transform:scaleX(0.9200);transform-origin:0 0">2019-10</div>
<svg style="position:absolute;left:273.8px;top:418.14px" width="13" height="16" viewBox="0 0 13 16" fill="#fbfbfb" stroke="#8c8c8c" stroke-width="1"><path d="M0.5 1.2 Q0.5 0.5 1.2 0.5 H8.5 L12.5 4.5 V14.8 Q12.5 15.5 11.8 15.5 H1.2 Q0.5 15.5 0.5 14.8 Z"/><path d="M8.5 0.5 V4.5 H12.5" fill="none"/></svg>
<div style="position:absolute;left:292.50px;top:419.98px;font-family:'Liberation Sans', sans-serif;font-size:12px;line-height:17px;color:#222222;white-space:pre;transform:scaleX(0.9656);transform-origin:0 0">002_data_augmentation</div>
<div style="position:absolute;left:526.10px;top:419.98px;font-family:'Liberation Sans', sans-serif;font-size:12px;line-height:17px;color:#6d6d6d;white-space:pre;transform:scaleX(0.9200);transform-origin:0 0">2022-09</div>
<svg style="position:absolute;left:273.8px;top:450.07px" width="13" height="16" viewBox="0 0 13 16" fill="#fbfbfb" stroke="#8c8c8c" stroke-width="1"><path d="M0.5 1.2 Q0.5 0.5 1.2 0.5 H8.5 L12.5 4.5 V14.8 Q12.5 15.5 11.8 15.5 H1.2 Q0.5 15.5 0.5 14.8 Z"/><path d="M8.5 0.5 V4.5 H12.5" fill="none"/></svg>
<div style="position:absolute;left:292.50px;top:451.91px;font-family:'Liberation Sans', sans-serif;font-size:12px;line-height:17px;color:#222222;white-space:pre;transform:scaleX(0.9204);transform-origin:0 0">003_hog</div>
<div style="position:absolute;left:526.10px;top:451.91px;font-family:'Liberation Sans', sans-serif;font-size:12px;line-height:17px;color:#6d6d6d;white-space:pre;transform:scaleX(0.9200);transform-origin:0 0">2022-09</div>
<svg style="position:absolute;left:273.8px;top:482.0px" width="13" height="16" viewBox="0 0 13 16" fill="#fbfbfb" stroke="#8c8c8c" stroke-width="1"><path d="M0.5 1.2 Q0.5 0.5 1.2 0.5 H8.5 L12.5 4.5 V14.8 Q12.5 15.5 11.8 15.5 H1.2 Q0.5 15.5 0.5 14.8 Z"/><path d="M8.5 0.5 V4.5 H12.5" fill="none"/></svg>
<div style="position:absolute;left:292.50px;top:483.84px;font-family:'Liberation Sans', sans-serif;font-size:12px;line-height:17px;color:#222222;white-space:pre;transform:scaleX(0.9984);transform-origin:0 0">app</div>
<div style="position:absolute;left:526.10px;top:483.84px;font-family:'Liberation Sans', sans-serif;font-size:12px;line-height:17px;color:#6d6d6d;white-space:pre;transform:scaleX(0.9200);transform-origin:0 0">2022-09</div>
<svg style="position:absolute;left:273.8px;top:513.9300000000001px" width="13" height="16" viewBox="0 0 13 16" fill="#fbfbfb" stroke="#8c8c8c" stroke-width="1"><path d="M0.5 1.2 Q0.5 0.5 1.2 0.5 H8.5 L12.5 4.5 V14.8 Q12.5 15.5 11.8 15.5 H1.2 Q0.5 15.5 0.5 14.8 Z"/><path d="M8.5 0.5 V4.5 H12.5" fill="none"/></svg>
<div style="position:absolute;left:292.50px;top:515.77px;font-family:'Liberation Sans', sans-serif;font-size:12px;line-height:17px;color:#222222;white-space:pre;transform:scaleX(0.9693);transform-origin:0 0">random_forest</div>
<div style="position:absolute;left:526.10px;top:515.77px;font-family:'Liberation Sans', sans-serif;font-size:12px;line-height:17px;color:#6d6d6d;white-space:pre;transform:scaleX(0.9200);transform-origin:0 0">2022-09</div>
<svg style="position:absolute;left:273.8px;top:545.86px" width="13" height="16" viewBox="0 0 13 16" fill="#fbfbfb" stroke="#8c8c8c" stroke-width="1"><path d="M0.5 1.2 Q0.5 0.5 1.2 0.5 H8.5 L12.5 4.5 V14.8 Q12.5 15.5 11.8 15.5 H1.2 Q0.5 15.5 0.5 14.8 Z"/><path d="M8.5 0.5 V4.5 H12.5" fill="none"/></svg>
<div style="position:absolute;left:292.50px;top:547.70px;font-family:'Liberation Sans', sans-serif;font-size:12px;line-height:17px;color:#222222;white-space:pre;transform:scaleX(0.9537);transform-origin:0 0">setup</div>
<div style="position:absolute;left:526.10px;top:547.70px;font-family:'Liberation Sans', sans-serif;font-size:12px;line-height:17px;color:#6d6d6d;white-space:pre;transform:scaleX(0.9200);transform-origin:0 0">2020-06</div>
<svg style="position:absolute;left:273.8px;top:577.79px" width="13" height="16" viewBox="0 0 13 16" fill="#fbfbfb" stroke="#8c8c8c" stroke-width="1"><path d="M0.5 1.2 Q0.5 0.5 1.2 0.5 H8.5 L12.5 4.5 V14.8 Q12.5 15.5 11.8 15.5 H1.2 Q0.5 15.5 0.5 14.8 Z"/><path d="M8.5 0.5 V4.5 H12.5" fill="none"/></svg>
<div style="position:absolute;left:292.50px;top:579.63px;font-family:'Liberation Sans', sans-serif;font-size:12px;line-height:17px;color:#222222;white-space:pre;transform:scaleX(0.9091);transform-origin:0 0">svm</div>
<div style="position:absolute;left:526.10px;top:579.63px;font-family:'Liberation Sans', sans-serif;font-size:12px;line-height:17px;color:#6d6d6d;white-space:pre;transform:scaleX(0.9200);transform-origin:0 0">2022-09</div>
<svg style="position:absolute;left:273.8px;top:609.72px" width="13" height="16" viewBox="0 0 13 16" fill="#fbfbfb" stroke="#8c8c8c" stroke-width="1"><path d="M0.5 1.2 Q0.5 0.5 1.2 0.5 H8.5 L12.5 4.5 V14.8 Q12.5 15.5 11.8 15.5 H1.2 Q0.5 15.5 0.5 14.8 Z"/><path d="M8.5 0.5 V4.5 H12.5" fill="none"/></svg>
<div style="position:absolute;left:292.50px;top:611.56px;font-family:'Liberation Sans', sans-serif;font-size:12px;line-height:17px;color:#222222;white-space:pre;transform:scaleX(0.9839);transform-origin:0 0">utils</div>
<div style="position:absolute;left:526.10px;top:611.56px;font-family:'Liberation Sans', sans-serif;font-size:12px;line-height:17px;color:#6d6d6d;white-space:pre;transform:scaleX(0.9200);transform-origin:0 0">2020-06</div>
<svg style="position:absolute;left:273.8px;top:641.6500000000001px" width="13" height="16" viewBox="0 0 13 16" fill="#fbfbfb" stroke="#8c8c8c" stroke-width="1"><path d="M0.5 1.2 Q0.5 0.5 1.2 0.5 H8.5 L12.5 4.5 V14.8 Q12.5 15.5 11.8 15.5 H1.2 Q0.5 15.5 0.5 14.8 Z"/><path d="M8.5 0.5 V4.5 H12.5" fill="none"/></svg>
<div style="position:absolute;left:292.50px;top:643.49px;font-family:'Liberation Sans', sans-serif;font-size:12px;line-height:17px;color:#222222;white-space:pre;transform:scaleX(0.9790);transform-origin:0 0">visualization</div>
<div style="position:absolute;left:526.10px;top:643.49px;font-family:'Liberation Sans', sans-serif;font-size:12px;line-height:17px;color:#6d6d6d;white-space:pre;transform:scaleX(0.9200);transform-origin:0 0">2022-09</div>
<div style="position:absolute;left:14.20px;top:774.54px;font-family:'Liberation Sans', sans-serif;font-size:12px;line-height:17px;color:#47525e;white-space:pre;transform:scaleX(0.9370);transform-origin:0 0">16 items</div>
<div style="position:absolute;left:66px;top:777px;width:1px;height:12px;background:#f6f6f6"></div>
<div style="position:absolute;left:77.70px;top:774.54px;font-family:'Liberation Sans', sans-serif;font-size:12px;line-height:17px;color:#47525e;white-space:pre;transform:scaleX(0.9552);transform-origin:0 0">1 item selected</div>
<svg style="position:absolute;left:348px;top:391.5px" width="12" height="17" viewBox="0 0 12 17"><path d="M0.6 0.6 V14.2 L3.9 11.2 L6.2 16.2 L8.3 15.3 L6 10.4 H10.6 Z" fill="#fff" stroke="#333" stroke-width="1"/></svg>
<div style="position:absolute;left:568px;top:162px;width:861.5px;height:496.3px;border-radius:8px;box-shadow:0 32px 52px -18px rgba(0,0,0,0.36),0 2px 10px rgba(0,0,0,0.08)"></div>
<div style="position:absolute;left:568px;top:162px;width:861.5px;height:496.3px;box-sizing:border-box;border:1px solid #c6c6c6;border-bottom:none;border-radius:8px;background:#fff;overflow:hidden"><div style="position:absolute;left:0;top:28px;width:843px;height:468px;background:#0c0c0c"></div><div style="position:absolute;left:843px;top:28px;width:18px;height:468px;background:#f0f0f0"></div></div>
<div style="position:absolute;left:1419px;top:212px;width:4.5px;height:16px;background:#858585;border-radius:1px"></div>
<svg style="position:absolute;left:576px;top:171px" width="15" height="12" viewBox="0 0 15 12"><rect x="0" y="0" width="15" height="12" rx="1" fill="#2a2a2a"/><rect x="0" y="0" width="15" height="2.5" fill="#4a4a4a"/></svg>
<div style="position:absolute;left:595.80px;top:169.24px;font-family:'Liberation Sans', sans-serif;font-size:12px;line-height:17px;color:#999999;white-space:pre;transform:scaleX(0.9763);transform-origin:0 0">Administrator: Anaconda Prompt (Anaconda3)</div>
<div style="position:absolute;left:1309px;top:176px;width:10px;height:1px;background:#9a9a9a"></div>
<div style="position:absolute;left:1354.5px;top:171.5px;width:10px;height:10px;box-sizing:border-box;border:1px solid #9a9a9a;border-radius:1.5px"></div>
<svg style="position:absolute;left:1400px;top:171px" width="12" height="12" viewBox="0 0 12 12" fill="none" stroke="#9a9a9a" stroke-width="1"><path d="M1 1 L11 11 M11 1 L1 11"/></svg>
<div style="position:absolute;left:568.5px;top:191.5px;width:844px;height:466px;overflow:hidden"><div style="position:absolute;left:-568.5px;top:-191.5px"><div style="position:absolute;left:569.0px;top:192.72px;height:15.64px;font-family:'Liberation Mono', monospace;font-size:13px;line-height:15.64px;color:#cccccc;white-space:pre;transform:scaleX(0.9005);transform-origin:0 0">(1128, 32400)</div><div style="position:absolute;left:569.0px;top:208.36px;height:15.64px;font-family:'Liberation Mono', monospace;font-size:13px;line-height:15.64px;color:#cccccc;white-space:pre;transform:scaleX(0.9005);transform-origin:0 0">(1128,)</div><div style="position:absolute;left:569.0px;top:224.00px;height:15.64px;font-family:'Liberation Mono', monospace;font-size:13px;line-height:15.64px;color:#cccccc;white-space:pre;transform:scaleX(0.9005);transform-origin:0 0">0.7393617021276596</div><div style="position:absolute;left:569.0px;top:255.28px;height:15.64px;font-family:'Liberation Mono', monospace;font-size:13px;line-height:15.64px;color:#cccccc;white-space:pre;transform:scaleX(0.9005);transform-origin:0 0">(base) D:\PythonRUN\Plant_Leaf_Disease&gt;python app.py -m svm --image 1</div><div style="position:absolute;left:569.0px;top:270.92px;height:15.64px;font-family:'Liberation Mono', monospace;font-size:13px;line-height:15.64px;color:#cccccc;white-space:pre;transform:scaleX(0.9005);transform-origin:0 0">C:\Program Files\Anaconda3\lib\site-packages\requests\__init__.py:80: RequestsDependencyWarning: urllib3 (1.25.11) or ch</div><div style="position:absolute;left:569.0px;top:286.56px;height:15.64px;font-family:'Liberation Mono', monospace;font-size:13px;line-height:15.64px;color:#cccccc;white-space:pre;transform:scaleX(0.9005);transform-origin:0 0">ardet (3.0.4) doesn&#x27;t match a supported version!</div><div style="position:absolute;left:569.0px;top:302.20px;height:15.64px;font-family:'Liberation Mono', monospace;font-size:13px;line-height:15.64px;color:#cccccc;white-space:pre;transform:scaleX(0.9005);transform-origin:0 0">  RequestsDependencyWarning)</div><div style="position:absolute;left:569.0px;top:317.84px;height:15.64px;font-family:'Liberation Mono', monospace;font-size:13px;line-height:15.64px;color:#cccccc;white-space:pre;transform:scaleX(0.9005);transform-origin:0 0">Attribute Qt::AA_EnableHighDpiScaling must be set before QCoreApplication is created.</div><div style="position:absolute;left:569.0px;top:333.48px;height:15.64px;font-family:'Liberation Mono', monospace;font-size:13px;line-height:15.64px;color:#cccccc;white-space:pre;transform:scaleX(0.9005);transform-origin:0 0">[INFO] Creating new folder...</div><div style="position:absolute;left:569.0px;top:364.76px;height:15.64px;font-family:'Liberation Mono', monospace;font-size:13px;line-height:15.64px;color:#cccccc;white-space:pre;transform:scaleX(0.9005);transform-origin:0 0">(base) D:\PythonRUN\Plant_Leaf_Disease&gt;python app.py -m svm --image 1</div></div></div><svg style="position:absolute;left:659px;top:341px" width="12" height="17" viewBox="0 0 12 17"><path d="M0.6 0.6 V14.2 L3.9 11.2 L6.2 16.2 L8.3 15.3 L6 10.4 H10.6 Z" fill="#fff" stroke="#111" stroke-width="1"/></svg>
<div style="position:absolute;left:1432px;top:758px;width:63px;height:31px;background:#363636"></div>
<div style="position:absolute;left:1463px;top:758px;width:1px;height:31px;background:#2e2e2e"></div>
<div style="position:absolute;left:1441px;top:767px;width:5px;height:14.5px;background:#adadad"></div>
<div style="position:absolute;left:1449.6px;top:767px;width:5px;height:14.5px;background:#adadad"></div>
<svg style="position:absolute;left:1470px;top:766.5px" width="19" height="15.5" viewBox="0 0 19 15.5" fill="none"><rect x="0.8" y="0.8" width="17.4" height="13.9" stroke="#9c9c9c" stroke-width="1.5"/><ellipse cx="9.5" cy="5.8" rx="1.8" ry="2.6" fill="#a3a3a3"/><path d="M3.6 14.7 Q4.8 10.2 9.5 9.6 Q14.2 10.2 15.4 14.7 Z" fill="#a3a3a3"/></svg>
<div style="position:absolute;left:1452px;top:789px;width:22px;height:5px;box-sizing:border-box;border:1px solid #4aa0d8;border-top:none;background:#cdeafc"></div>
</body></html>
